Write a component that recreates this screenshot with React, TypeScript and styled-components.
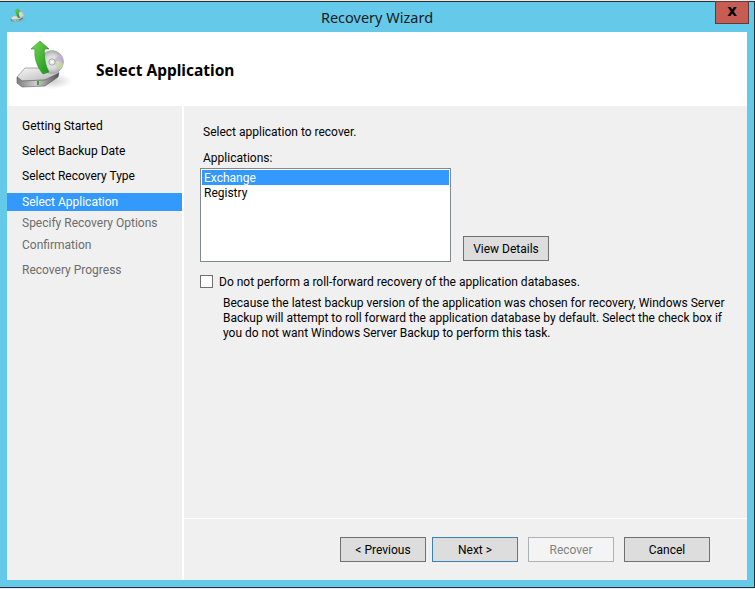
import React from 'react';
import styled, { createGlobalStyle } from 'styled-components';

const GlobalStyle = createGlobalStyle`
  html, body {
    margin: 0;
    padding: 0;
    background: #e9e9e9;
  }
  * {
    box-sizing: border-box;
  }
`;

function BackupIcon({ size }: { size: number }) {
  return (
    <svg width={size} height={size} viewBox="0 0 60 60">
      <defs>
        <linearGradient id="driveTop" x1="0" y1="0" x2="1" y2="1">
          <stop offset="0" stopColor="#f8f8f8" />
          <stop offset="1" stopColor="#b4b4b4" />
        </linearGradient>
        <linearGradient id="driveFront" x1="0" y1="0" x2="1" y2="0">
          <stop offset="0" stopColor="#7d7d7d" />
          <stop offset="0.45" stopColor="#cfcfcf" />
          <stop offset="1" stopColor="#4f4f4f" />
        </linearGradient>
        <radialGradient id="disc">
          <stop offset="0" stopColor="#f6f6f6" />
          <stop offset="0.6" stopColor="#d6d7d9" />
          <stop offset="1" stopColor="#a9abab" />
        </radialGradient>
        <linearGradient id="arrow" x1="0" y1="0" x2="1" y2="1">
          <stop offset="0" stopColor="#7edb55" />
          <stop offset="1" stopColor="#17931a" />
        </linearGradient>
        <radialGradient id="shadow">
          <stop offset="0" stopColor="#9a9a9a" stopOpacity="0.5" />
          <stop offset="1" stopColor="#9a9a9a" stopOpacity="0" />
        </radialGradient>
      </defs>
      <ellipse cx="38" cy="42" rx="20" ry="8" fill="url(#shadow)" />
      <path d="M3 38 L11 29 L42 29 L45 34 L31 41 L8 42 Z" fill="url(#driveTop)" stroke="#8a8a8a" strokeWidth="0.7" />
      <path d="M3 38 L8 42 L31 41 L45 34 L44 38 L31 47 L8 48 L3 44 Z" fill="url(#driveFront)" stroke="#5f5f5f" strokeWidth="0.6" />
      <rect x="23" y="42" width="2" height="4" fill="#2fae2f" />
      <circle cx="38" cy="23" r="11.5" fill="url(#disc)" stroke="#9c9c9c" strokeWidth="0.5" />
      <path d="M38 23 L46 15 A11.5 11.5 0 0 1 49.5 22 Z" fill="#c3aed0" opacity="0.75" />
      <path d="M38 23 L46 31 A11.5 11.5 0 0 0 49.5 24 Z" fill="#c6d99c" opacity="0.75" />
      <circle cx="38" cy="23" r="3.2" fill="#e8e8e8" stroke="#8e8e8e" strokeWidth="0.7" />
      <circle cx="38" cy="23" r="1.2" fill="#ffffff" />
      <path
        d="M26 2 L35 10 L30.5 10 C30 17 31 26 35 33 L29 35 C23 28 20 19 21 10 L17 10 Z"
        fill="url(#arrow)"
        stroke="#2c8f24"
        strokeWidth="0.6"
      />
    </svg>
  );
}

const steps = [
  { label: 'Getting Started', gap: 11 },
  { label: 'Select Backup Date', gap: 7 },
  { label: 'Select Recovery Type', gap: 7 },
  { label: 'Select Application', gap: 8, active: true },
  { label: 'Specify Recovery Options', gap: 3, disabled: true },
  { label: 'Confirmation', gap: 4, disabled: true },
  { label: 'Recovery Progress', gap: 7, disabled: true },
];

export default function App() {
  return (
    <>
      <GlobalStyle />
      <Page>
        <Frame>
          <TitleBar>
            <TitleIcon>
              <BackupIcon size={17} />
            </TitleIcon>
            <Title>Recovery Wizard</Title>
            <CloseButton>x</CloseButton>
          </TitleBar>
          <Client>
            <Header>
              <HeaderIcon>
                <BackupIcon size={60} />
              </HeaderIcon>
              <HeaderTitle>Select Application</HeaderTitle>
            </Header>
            <Body>
              <Sidebar>
                {steps.map((step) => (
                  <Step key={step.label} $gap={step.gap} $active={step.active} $disabled={step.disabled}>
                    {step.label}
                  </Step>
                ))}
              </Sidebar>
              <Main>
                <Content>
                  <Intro>Select application to recover.</Intro>
                  <ListLabel>Applications:</ListLabel>
                  <ListRow>
                    <ListBox>
                      <ListItem $selected>Exchange</ListItem>
                      <ListItem>Registry</ListItem>
                    </ListBox>
                    <DetailsButton>View Details</DetailsButton>
                  </ListRow>
                  <CheckRow>
                    <CheckBox />
                    <CheckLabel>Do not perform a roll-forward recovery of the application databases.</CheckLabel>
                  </CheckRow>
                  <Description>
                    Because the latest backup version of the application was chosen for recovery, Windows Server
                    <br />
                    Backup will attempt to roll forward the application database by default. Select the check box if
                    <br />
                    you do not want Windows Server Backup to perform this task.
                  </Description>
                </Content>
                <Footer>
                  <WizardButton>&lt; Previous</WizardButton>
                  <WizardButton $primary>Next &gt;</WizardButton>
                  <WizardButton $disabled $wide>Recover</WizardButton>
                  <WizardButton $wide>Cancel</WizardButton>
                </Footer>
              </Main>
            </Body>
          </Client>
        </Frame>
      </Page>
    </>
  );
}

const Page = styled.div`
  width: 755px;
  height: 589px;
  padding-top: 1px;
  overflow: hidden;
  background: #e9e9e9;
  font-family: 'Roboto', 'Noto Sans', sans-serif;
  font-size: 12px;
  color: #000;
`;

const Frame = styled.div`
  position: relative;
  width: 755px;
  height: 587px;
  display: flex;
  flex-direction: column;
  background: #65c9ea;
  border-top: 1px solid #2e2e2e;
  border-right: 1px solid #2e2e2e;
  border-bottom: 1px solid #2e2e2e;
  padding: 0 7px 7px 7px;
`;

const TitleBar = styled.div`
  height: 30px;
  display: flex;
  align-items: center;
  justify-content: center;
  flex-shrink: 0;
`;

const TitleIcon = styled.div`
  position: absolute;
  left: 10px;
  top: 6px;
  display: flex;
`;

const Title = styled.div`
  font-family: 'Noto Sans', sans-serif;
  font-size: 14.5px;
  color: #1a1a1a;
`;

const CloseButton = styled.div`
  position: absolute;
  right: 5px;
  top: -1px;
  width: 34px;
  height: 23px;
  display: flex;
  align-items: center;
  justify-content: center;
  background: #c75c52;
  border: 1px solid #5f3b3b;
  font-family: 'DejaVu Sans', sans-serif;
  font-size: 15px;
  font-weight: 700;
  line-height: 1;
  padding-bottom: 3px;
`;

const Client = styled.div`
  flex: 1;
  display: flex;
  flex-direction: column;
  background: #fff;
  min-height: 0;
`;

const Header = styled.div`
  height: 74px;
  flex-shrink: 0;
  display: flex;
  align-items: center;
  position: relative;
  padding-left: 89px;
`;

const HeaderIcon = styled.div`
  position: absolute;
  left: 7px;
  top: 7px;
  display: flex;
`;

const HeaderTitle = styled.div`
  font-family: 'Noto Sans', sans-serif;
  font-size: 15.5px;
  font-weight: 700;
  padding-top: 2px;
`;

const Body = styled.div`
  flex: 1;
  display: flex;
  gap: 2px;
  min-height: 0;
`;

const Sidebar = styled.div`
  width: 175px;
  background: #f0f0f0;
  flex-shrink: 0;
`;

const Step = styled.div<{ $gap: number; $active?: boolean; $disabled?: boolean }>`
  height: 18px;
  line-height: 18px;
  margin-top: ${(p) => p.$gap}px;
  padding-left: 15px;
  white-space: nowrap;
  background: ${(p) => (p.$active ? '#3399ff' : 'transparent')};
  color: ${(p) => (p.$active ? '#fff' : p.$disabled ? '#6d6d6d' : '#000')};
`;

const Main = styled.div`
  flex: 1;
  min-width: 0;
  display: flex;
  flex-direction: column;
  background: #f0f0f0;
`;

const Content = styled.div`
  flex: 1;
  padding: 18px 0 0 16px;
`;

const Intro = styled.div`
  line-height: 16px;
  padding-left: 3px;
`;

const ListLabel = styled.div`
  line-height: 16px;
  margin-top: 10px;
  padding-left: 3px;
`;

const ListRow = styled.div`
  display: flex;
  align-items: flex-end;
  gap: 12px;
  margin-top: 2px;
`;

const ListBox = styled.div`
  width: 251px;
  height: 94px;
  padding: 1px;
  background: #fff;
  border: 1px solid #828790;
`;

const ListItem = styled.div<{ $selected?: boolean }>`
  height: 15px;
  line-height: 17px;
  padding-left: 2px;
  background: ${(p) => (p.$selected ? '#3399ff' : 'transparent')};
  color: ${(p) => (p.$selected ? '#fff' : '#000')};
`;

const DetailsButton = styled.div`
  width: 86px;
  height: 25px;
  margin-bottom: 1px;
  display: flex;
  align-items: center;
  justify-content: center;
  background: #dddddd;
  border: 1px solid #707070;
`;

const CheckRow = styled.div`
  display: flex;
  align-items: center;
  gap: 6px;
  margin-top: 12px;
  height: 14px;
`;

const CheckBox = styled.div`
  width: 13px;
  height: 13px;
  background: #fff;
  border: 1px solid #707070;
`;

const CheckLabel = styled.div`
  white-space: nowrap;
  padding-top: 2px;
`;

const Description = styled.div`
  margin: 8px 0 0 23px;
  line-height: 15px;
  white-space: nowrap;
`;

const Footer = styled.div`
  height: 62px;
  flex-shrink: 0;
  display: flex;
  justify-content: flex-end;
  align-items: flex-start;
  padding: 18px 37px 0 0;
  gap: 6px;
  border-top: 1px solid #fff;
`;

const WizardButton = styled.div<{ $primary?: boolean; $disabled?: boolean; $wide?: boolean }>`
  width: 86px;
  height: 25px;
  margin-left: ${(p) => (p.$wide ? '4px' : '0')};
  display: flex;
  align-items: center;
  justify-content: center;
  background: ${(p) => (p.$disabled ? '#f4f4f4' : '#dddddd')};
  color: ${(p) => (p.$disabled ? '#838383' : '#000')};
  border: 1px solid ${(p) => (p.$primary ? '#3c7fb1' : p.$disabled ? '#adb2b5' : '#707070')};
`;
